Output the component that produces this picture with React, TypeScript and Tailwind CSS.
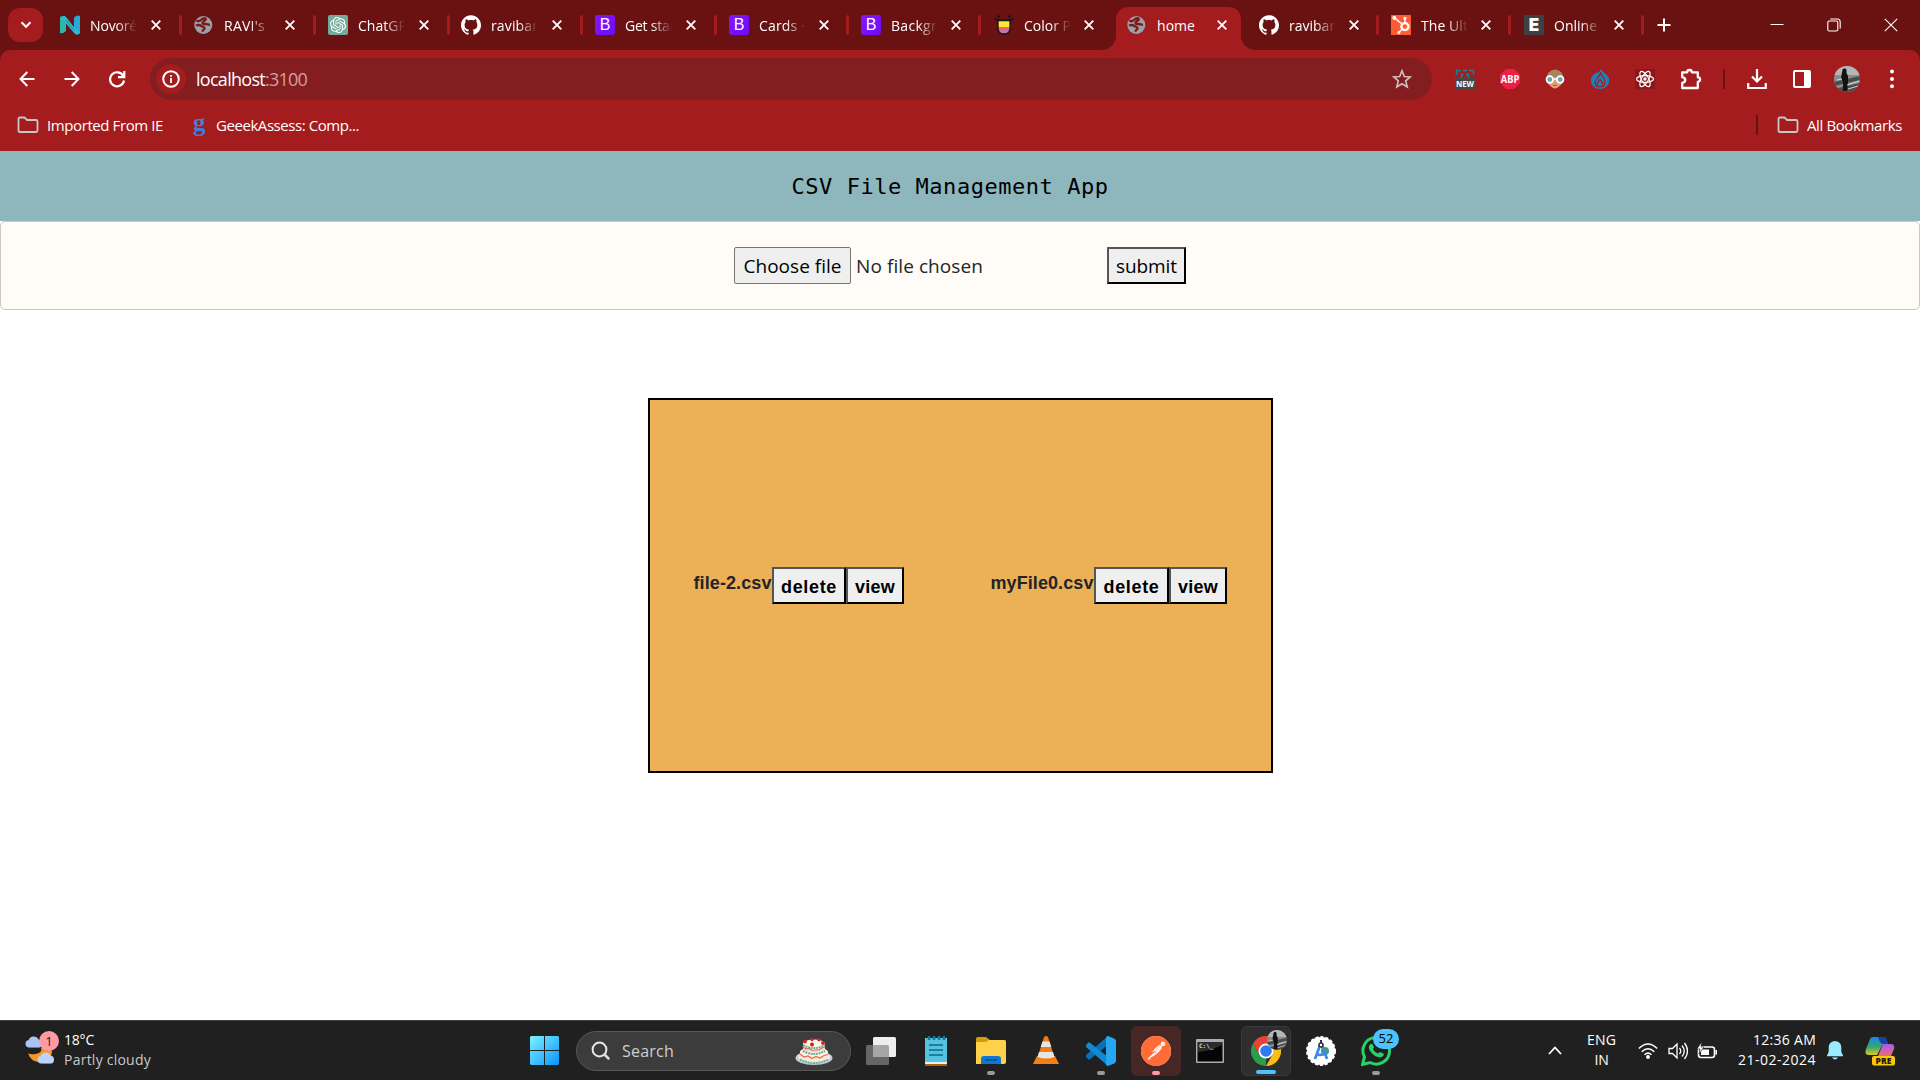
import React, { useLayoutEffect, useRef, useState } from "react";
import { SiGithub, SiOpenai, SiHubspot, SiPostman } from "react-icons/si";

const ui = "font-['Open_Sans','Noto_Sans',sans-serif]";

/* Single line of text whose tracking is adjusted so that it spans `w` pixels. */
function Fit({ w, children, className = "" }: { w: number; children: string; className?: string }) {
  const ref = useRef<HTMLSpanElement>(null);
  const [spacing, setSpacing] = useState(0);
  useLayoutEffect(() => {
    if (ref.current) {
      const natural = ref.current.getBoundingClientRect().width;
      setSpacing((w - natural) / children.length);
    }
  }, []);
  return (
    <span ref={ref} className={`inline-block whitespace-pre ${className}`} style={{ letterSpacing: spacing }}>
      {children}
    </span>
  );
}

const Globe = () => (
  <svg viewBox="0 0 20 20" className="size-5">
    <circle cx="9.3" cy="10" r="9" fill="#9aa0a6" />
    <path d="M2.500 5.500C4 6.500 6 6 7.500 4.500 8.500 3.500 10.500 3 12 3.500M12 3.500c.5 2-3 2.500-3.500 4-.3 1.500 1.500 1.500 3 1.500 2 0 3 1 4.500 .8M2 10.500c2-.8 4-.5 5.500.5 1.500 1 3 .8 3 2.200 0 1.500-2 1.500-2 3.500" fill="none" stroke="#7e1719" strokeWidth="2.300" />
  </svg>
);
const BootstrapIcon = () => (
  <div className="flex size-5 items-center justify-center rounded-[3px] bg-gradient-to-br from-[#8a12ff] to-[#6a0cf5] font-['Liberation_Sans',sans-serif] text-[16px] leading-none text-white">B</div>
);
const Novo = () => (
  <svg viewBox="0 0 20 20" className="size-5">
    <path d="M0 3q0-2.500 2-1.500L6 4v12q-3 3-6 2z" fill="#2fb7a6" />
    <path d="M14 2.500q3-3 6-1.500v16q0 3-3 1.500l-3-2z" fill="#26a9d8" />
    <path d="M2 1.500Q4-.5 6.500 2.500L15 13.500q3 3 5 3.500-1 4-5 2L2 4z" fill="#25bfd3" />
    <path d="M6 5l8 10.500" stroke="#1689a5" strokeWidth="1" />
  </svg>
);
const ChatIcon = () => (
  <div className="flex size-5 items-center justify-center rounded-[2px] bg-[#74aa9c] text-white"><SiOpenai size={16} /></div>
);
const ColorHunt = () => (
  <svg viewBox="0 0 20 20" className="size-5">
    <path d="M4 5h12v8c0 3-2 5.500-6 5.500S4 16 4 13z" fill="#ffe92e" />
    <path d="M4 12h12l-.5 3h-11z" fill="#ff5b6d" />
    <path d="M4.500 15h11c-.5 2-2.500 4-5.500 4s-5-2-5.500-4z" fill="#b67bb4" />
    <path d="M.5 4c4 2 15 2 19 0M3.900 5v8c0 3.500 2.500 6 6.100 6s6.100-2.500 6.100-6V5" fill="none" stroke="#161616" strokeWidth="1.500" />
    <circle cx="4.500" cy="1.500" r="1.300" fill="#161616" /><circle cx="15.500" cy="1.500" r="1.300" fill="#161616" />
  </svg>
);
const HubIcon = () => <div className="flex size-5 items-center justify-center bg-[#ff5c35] text-white"><SiHubspot size={18} /></div>;
const EIcon = () => <div className="flex size-5 items-center justify-center bg-[#3b4145] font-['Inter',sans-serif] text-[17px] leading-none font-black text-white">E</div>;
const Git = () => <SiGithub size={20} className="text-white" />;

const tabs = [
  { icon: <Novo />, text: "Novoré", w: 47 },
  { icon: <Globe />, text: "RAVI's I", w: 49 },
  { icon: <ChatIcon />, text: "ChatGP", w: 49 },
  { icon: <Git />, text: "raviban", w: 50 },
  { icon: <BootstrapIcon />, text: "Get star", w: 50 },
  { icon: <BootstrapIcon />, text: "Cards ·", w: 46 },
  { icon: <BootstrapIcon />, text: "Backgr", w: 46 },
  { icon: <ColorHunt />, text: "Color P", w: 47 },
  { icon: <Globe />, text: "home", w: 38, active: true },
  { icon: <Git />, text: "raviban", w: 49 },
  { icon: <HubIcon />, text: "The Ult", w: 47 },
  { icon: <EIcon />, text: "Online", w: 43 },
];

const TabX = () => (
  <svg viewBox="0 0 10 10" className="size-2.5"><path d="M.7.7l8.600 8.600M9.300.7L.7 9.300" stroke="#fff" strokeWidth="1.800" /></svg>
);

function TabStrip() {
  return (
    <div className="flex h-[50px] bg-[#6a1112] pl-2">
      <div className="mt-2 flex h-[34px] w-[35px] items-center justify-center rounded-xl bg-[#a51c1e]">
        <svg viewBox="0 0 12 8" className="h-2 w-3"><path d="M1.500 1.300L6 5.800l4.500-4.500" fill="none" stroke="#fff" strokeWidth="2" /></svg>
      </div>
      <div className="ml-[17px] grid grid-cols-[134px_134px_133px_134px_134px_132px_133px_133px_132px_132px_133px_133px]">
        {tabs.map((t, i) => (
          <div key={i} className="relative flex h-[50px] items-center">
            {t.active && (
              <svg viewBox="0 0 156 43" className="absolute top-[7px] left-[-26px] h-[43px] w-[156px]">
                <path d="M0 43c8 0 15-6 15-14V13C15 5 20 0 28 0h99c8 0 13 5 13 13v16c0 8 7 14 15 14z" fill="#a51c1e" />
              </svg>
            )}
            <div className="relative flex w-5 shrink-0">{t.icon}</div>
            <div className={`relative ml-2.5 h-6 w-[48px] shrink-0 overflow-hidden pt-px text-[14px] leading-6 text-white ${t.active ? "" : "[mask-image:linear-gradient(to_right,#000_55%,transparent_98%)]"}`}>
              <Fit w={t.w}>{t.text}</Fit>
            </div>
            <div className={`relative flex ${i > 4 ? "ml-3" : "ml-[13px]"}`}><TabX /></div>
            {i !== 7 && i !== 8 && <div className={`h-5 w-[3px] rounded-full bg-[#a51c1e] ${i > 4 ? "ml-[17px]" : "ml-[18px]"}`} />}
          </div>
        ))}
      </div>
      <svg viewBox="0 0 14 14" className="mt-[18px] size-3.5"><path d="M7 .5v13M.5 7h13" stroke="#fff" strokeWidth="2" /></svg>
      <div className="ml-auto flex items-center gap-[43px] pr-[22px]">
        <svg viewBox="0 0 14 14" className="size-3.5"><path d="M.5 6.500h13" stroke="#fff" strokeWidth="1" /></svg>
        <svg viewBox="0 0 14 14" className="size-3.5" fill="none" stroke="#fff" strokeWidth="1.100"><rect x=".8" y="3" width="10" height="10" rx="1.500" /><path d="M3.300 1h6.900q3 0 3 3v6.500" /></svg>
        <svg viewBox="0 0 14 14" className="size-3.5"><path d="M.8.8l12.400 12.400M13.200.8L.8 13.200" stroke="#fff" strokeWidth="1.100" /></svg>
      </div>
    </div>
  );
}

const Portrait = ({ className }: { className: string }) => (
  <svg viewBox="0 0 26 26" className={className}>
    <defs><clipPath id="portrait"><circle cx="13" cy="13" r="13" /></clipPath></defs>
    <g clipPath="url(#portrait)">
      <rect width="26" height="26" fill="#8b8d8c" /><rect width="26" height="9" fill="#b5b7b6" />
      <path d="M0 16l26-6v4L0 20zM0 23l26-6v9H0z" fill="#4a4c4b" />
      <path d="M8.500 4c0-2 4-2 4 0v3l1.500 3v8l-1 7H9V16L7 12z" fill="#121212" />
      <path d="M13 19l12-4M3 14l5-1M14 23l10-3" stroke="#d4d4d4" />
    </g>
  </svg>
);

const Folder = () => (
  <svg viewBox="0 0 22 18" className="h-[18px] w-[22px]"><path d="M1.500 3Q1.500 1.500 3 1.500h4.500l2.500 2.500h9q1.500 0 1.500 1.500v9q0 1.500-1.500 1.500H3q-1.500 0-1.500-1.500z" fill="none" stroke="#c7c7c7" strokeWidth="1.800" /></svg>
);

function Toolbar() {
  return (
    <div className="bg-[#6a1112]">
      <div className="h-[101px] rounded-t-[10px] bg-[#a51c1e]">
        <div className="flex h-[58px] items-center pl-[19px]">
          <svg viewBox="0 0 16 16" className="size-4" fill="none" stroke="#fff" strokeWidth="2"><path d="M15.500 8H2M8.300 1L1.500 8l6.800 7" /></svg>
          <svg viewBox="0 0 16 16" className="ml-[29px] size-4" fill="none" stroke="#fff" strokeWidth="2"><path d="M.5 8H14M7.700 1l6.800 7-6.800 7" /></svg>
          <svg viewBox="0 0 18 18" className="ml-7 size-[18px]" fill="none" stroke="#fff" strokeWidth="2.200"><path d="M15.300 6A7 7 0 1 0 16 10.500M16.300 1v6.200H10" /></svg>
          <div className="ml-6 flex h-[42px] w-[1282px] items-center rounded-full bg-[#841d1f] pl-[6px]">
            <div className="flex size-[30px] items-center justify-center rounded-full bg-[#a51c1e]">
              <svg viewBox="0 0 18 18" className="size-[18px]"><circle cx="9" cy="9" r="7.800" fill="none" stroke="#fff" strokeWidth="2" /><path d="M9 8v5M9 5v1.800" stroke="#fff" strokeWidth="1.800" /></svg>
            </div>
            <div className="ml-[10px] flex text-[18px] leading-6"><Fit w={69} className="text-white">localhost</Fit><Fit w={42} className="text-[#d5a0a1]">:3100</Fit></div>
            <svg viewBox="0 0 20 20" className="mr-5 ml-auto size-5"><path d="M10 1.800l2.300 5.700 6 .4-4.600 4 1.500 6L10 14.700l-5.200 3.200 1.500-6-4.600-4 6-.4z" fill="none" stroke="#d0bcbc" strokeWidth="1.700" /></svg>
          </div>
          <div className="ml-[23px] flex items-center gap-[25px]">
            <svg viewBox="0 0 20 20" className="size-5"><path d="M1.500 6V1.500H6M8 1.500h4M14 1.500h4.500V6M6.500 9V5.500h2M11 5.500h2.500V9" fill="none" stroke="#1b8291" strokeWidth="1.500" /><rect y="9" width="20" height="11" fill="#474747" /><text x="10" y="18" textAnchor="middle" textLength="18" lengthAdjust="spacingAndGlyphs" fontSize="9" fontWeight="700" fontFamily="Open Sans, sans-serif" fill="#fff">NEW</text></svg>
            <svg viewBox="0 0 20 20" className="size-5"><path d="M6 0h8l6 6v8l-6 6H6l-6-6V6z" fill="#f01d45" /><text x="10" y="14" textAnchor="middle" textLength="18.500" lengthAdjust="spacingAndGlyphs" fontSize="11" fontWeight="700" fontFamily="Open Sans, sans-serif" fill="#fff">ABP</text></svg>
            <svg viewBox="0 0 20 20" className="size-5"><ellipse cx="10" cy="9.500" rx="8.700" ry="9" fill="#a88558" /><path d="M3 8h14v5q-3 6.500-7 6.500T3 13z" fill="#e3a173" /><path d="M3 8q8 0 12-5l3 6" fill="#a88558" /><circle cx="4.800" cy="10.500" r="3.300" fill="#64a6ba" stroke="#fff" strokeWidth="1.700" /><circle cx="15.200" cy="10.500" r="3.300" fill="#64a6ba" stroke="#fff" strokeWidth="1.700" /><path d="M8.300 10h3.400" stroke="#fff" strokeWidth="1.500" /><path d="M8 16.300h4" stroke="#9b5741" /></svg>
            <svg viewBox="0 0 20 20" className="size-5"><path d="M11 0c1 3 6 4.500 7.500 8.500C20.500 14 17 20 10 20S-.5 14 1.500 8.500C2.500 6 4 5.500 5 4c2 .5 5-1 6-4z" fill="#207fb5" /><path d="M10.500 3C11 7 7 8 5.500 12c-.8 2.500 0 4.500 1.500 6M10.500 3c0 4 4.500 5.500 4.500 10 0 2-.8 4-2 5" fill="none" stroke="#a51c1e" strokeWidth="1.200" /><path d="M10 10.500c2 2 2.700 3.300 2.700 4.800a2.700 2.700 0 0 1-5.400 0c0-1.500.7-2.800 2.700-4.800z" fill="none" stroke="#a51c1e" strokeWidth="1.200" /></svg>
            <svg viewBox="0 0 20 20" className="size-5"><rect width="20" height="20" rx="1" fill="#8c171a" /><g fill="none" stroke="#fff" strokeWidth="1.200"><ellipse cx="10" cy="10" rx="8.500" ry="3.400" /><ellipse cx="10" cy="10" rx="8.500" ry="3.400" transform="rotate(60 10 10)" /><ellipse cx="10" cy="10" rx="8.500" ry="3.400" transform="rotate(120 10 10)" /></g><circle cx="10" cy="10" r="1.700" fill="#fff" /></svg>
            <svg viewBox="0 0 22 22" className="size-[22px]"><path d="M2.200 4.300h5a2.300 2.300 0 0 1 4.600 0h6v5a2.300 2.300 0 0 1 0 4.600V20H2.200v-5q3-.5 3-2.900t-3-2.900z" fill="none" stroke="#fff" strokeWidth="2.300" strokeLinejoin="round" /></svg>
          </div>
          <div className="ml-[21px] h-5 w-[2px] bg-[#6a1112]" />
          <svg viewBox="0 0 20 20" className="ml-[22px] size-5" fill="none" stroke="#fff" strokeWidth="2.200"><path d="M10 0v12M5 7.500l5 5 5-5M1.200 14v5h17.600v-5" /></svg>
          <svg viewBox="0 0 20 20" className="ml-[25px] size-5"><rect x="2" y="2" width="16" height="16" rx="1" fill="none" stroke="#fff" strokeWidth="2" /><path d="M12 2h6v16h-6z" fill="#fff" /></svg>
          <Portrait className="ml-[22px] size-[26px]" />
          <svg viewBox="0 0 4 20" className="ml-[30px] h-5 w-1" fill="#fff"><circle cx="2" cy="2.500" r="2" /><circle cx="2" cy="10" r="2" /><circle cx="2" cy="17.300" r="2" /></svg>
        </div>
        <div className="flex h-[34px] items-center pr-[18px] pl-[17px] text-[15px] leading-6 text-white">
          <Folder />
          <Fit w={116} className="ml-2">Imported From IE</Fit>
          <span className="ml-[30px] w-[14px] font-['Liberation_Serif',serif] text-[25px] leading-5 font-bold text-[#3f7fd6] -mt-1">g</span>
          <Fit w={143} className="ml-[9px]">GeeekAssess: Comp...</Fit>
          <div className="mr-[19px] ml-auto h-5 w-[2px] bg-[#6a1112]" />
          <Folder />
          <Fit w={95} className="ml-[8px]">All Bookmarks</Fit>
        </div>
      </div>
    </div>
  );
}

const FileButton = ({ children, w, box }: { children: string; w: number; box: string }) => (
  <button className={`flex h-[37px] items-center justify-center border-2 border-t-[#555] border-r-black border-b-black border-l-[#555] bg-[#efefef] pt-0.5 pl-px text-black ${box}`}>
    <Fit w={w}>{children}</Fit>
  </button>
);

function Page() {
  return (
    <main className="h-[869px] bg-white">
      <header className="flex h-[70px] items-center justify-center bg-[#8db7bc] pt-0.5 pr-5">
        <h1 className="font-['DejaVu_Sans_Mono',monospace] text-[22px] leading-none text-black"><Fit w={317}>CSV File Management App</Fit></h1>
      </header>
      <section className="flex h-[89px] items-center rounded-[5px] border border-[#cacaca] bg-[#fffbf6] pl-[733px] text-[19px] leading-7">
        <button className="flex h-[37px] w-[117px] items-center justify-center rounded-[2px] border border-[#767676] bg-[#efefef] text-black"><Fit w={98}>Choose file</Fit></button>
        <Fit w={127} className="ml-[5px] text-[#212529]">No file chosen</Fit>
        <button className="ml-[124px] flex h-[37px] w-[79px] items-center justify-center border-2 border-t-[#555] border-r-black border-b-black border-l-[#555] bg-[#efefef] text-black"><Fit w={61}>submit</Fit></button>
      </section>
      <section className="mx-auto mt-[88px] flex h-[375px] w-[625px] items-center border-2 border-black bg-[#ecb057] pl-[44px] font-['Liberation_Sans',sans-serif] text-[18px] leading-6 font-bold">
        <Fit w={78} className="-mt-1.5 text-[#212529]">file-2.csv</Fit>
        <FileButton w={56} box="w-[74px]">delete</FileButton>
        <FileButton w={40} box="w-[58px]">view</FileButton>
        <Fit w={103} className="-mt-1.5 ml-[87px] text-[#212529]">myFile0.csv</Fit>
        <FileButton w={56} box="w-[75px]">delete</FileButton>
        <FileButton w={40} box="w-[58px]">view</FileButton>
      </section>
    </main>
  );
}

const Cloud = ({ x, y, w, o }: { x: number; y: number; w: number; o: string }) => (
  <svg x={x} y={y} width={w} height={w * 0.65} viewBox="0 0 20 13"><path d="M4.500 13a4.300 4.300 0 0 1-.5-8.500 6 6 0 0 1 11-.5 4.600 4.600 0 0 1 .5 9z" fill={o} /></svg>
);

const Cake = () => (
  <svg viewBox="0 0 38 28" className="h-7 w-[38px]">
    <ellipse cx="19" cy="21" rx="18.500" ry="7" fill="#c9c9d6" />
    <ellipse cx="19" cy="20" rx="16" ry="6" fill="#e9e9f0" />
    <path d="M5 15v7q14 7 28 0v-7z" fill="#fbead0" /><ellipse cx="19" cy="15" rx="14" ry="4.500" fill="#fff6e4" />
    <path d="M8 6v8q11 5 22 0V6z" fill="#fbe5c8" /><ellipse cx="19" cy="6.500" rx="11" ry="4" fill="#fff8e8" />
    <path d="M8 8q11 6 22 0M8 14q11 6 22 0M5 22.500q14 7 28 0" fill="none" stroke="#5db5ac" strokeWidth="2" strokeDasharray="2 .7" />
    <path d="M8 10l3 2 3-.5 3 2 4-.5 3 0 3-2 3-1M5 17l4 3 4-1 4 2.500 4-2 4 1.500 4-2.500 4-1" fill="none" stroke="#e2675e" strokeWidth="1.200" />
    <g fill="#c8251f"><circle cx="10" cy="4.500" r="1.900" /><circle cx="17" cy="7.500" r="2" /><circle cx="28" cy="6" r="1.900" /><circle cx="24" cy="2.800" r="1.700" /><circle cx="17" cy="2.500" r="1.700" /></g>
  </svg>
);

const Dot = ({ c = "w-2 bg-[#999]" }: { c?: string }) => <div className={`absolute bottom-[1px] left-1/2 h-1 -translate-x-1/2 rounded-full ${c}`} />;

function Task({ children, box, dot }: { children: React.ReactNode; box: string; dot?: React.ReactNode }) {
  return <div className={`relative flex h-[50px] items-center justify-center rounded-md ${box}`}>{children}{dot}</div>;
}

function Taskbar() {
  return (
    <footer className="flex h-[60px] items-center border-t border-[#3b403f] bg-[#202020] text-white">
      <div className="flex w-[530px] shrink-0 items-center self-start pt-[7px] pl-6">
        <svg viewBox="0 0 36 36" className="size-9">
          <path d="M17 17q2 4-5 6-6 1-8-1 3 10 14 9 9-1 10-10-1-5-5-6z" fill="#f39a26" />
          <Cloud x={1} y={5} w={18} o="#a9c5f4" /><Cloud x={13} y={21} w={18} o="#bcd3fa" />
          <circle cx="25" cy="10" r="10" fill="#ff99a4" />
          <text x="25" y="14.500" fontSize="13" textAnchor="middle" fontFamily="Open Sans, sans-serif" fill="#25191b">1</text>
        </svg>
        <div className="ml-1 flex flex-col items-start pt-0.5 text-[14px] leading-5"><Fit w={30}>18°C</Fit><Fit w={87} className="text-[#c9c9c9]">Partly cloudy</Fit></div>
      </div>
      <svg viewBox="0 0 29 29" className="size-[29px]">
        <defs><linearGradient id="win" x1="0" y1="0" x2="1" y2="1"><stop stopColor="#7df3ff" /><stop offset="1" stopColor="#0a93ff" /></linearGradient></defs>
        <path d="M1 0h13v14H0V1zM15 0h13l1 1v13H15zM0 15h14v14H1l-1-1zM15 15h14v13l-1 1H15z" fill="url(#win)" />
      </svg>
      <div className="ml-[17px] flex h-10 w-[275px] items-center rounded-full border border-[#575757] bg-[#3c3c3c] pr-[17px] pl-[14px]">
        <svg viewBox="0 0 19 19" className="size-[19px]" fill="none"><circle cx="8.500" cy="8.500" r="6.900" stroke="#e8e8e8" strokeWidth="2" /><path d="M13.500 13.500l4 4" stroke="#ddd" strokeWidth="2.500" strokeLinecap="round" /></svg>
        <Fit w={52} className="ml-3 text-[16px] leading-6 text-[#cfcfcf]">Search</Fit>
        <div className="ml-auto"><Cake /></div>
      </div>
      <Task box="w-[60px]">
        <svg viewBox="0 0 30 28" className="h-7 w-[30px]"><rect y="8" width="23" height="20" rx="1.500" fill="#666" /><rect x="7" width="23" height="20" rx="1.500" fill="#eee" /><path d="M7 8h14.500q1.500 0 1.500 1.500V20H7z" fill="#a6a6a6" /></svg>
      </Task>
      <Task box="w-[50px]">
        <svg viewBox="0 0 22 30" className="h-[30px] w-[22px]"><rect y="25" width="22" height="5" rx="1" fill="#b35a14" /><rect y="2" width="22" height="26" fill="#e9eef0" /><rect y="2" width="22" height="24" rx="1" fill="#55c3df" /><path d="M4 9h14M4 14h14M4 19h14" stroke="#0b6a8a" strokeWidth="1.700" /><path d="M4 0v4M9 0v4M14 0v4M19 0v4" stroke="#14799c" strokeWidth="2.500" /></svg>
      </Task>
      <Task box="ml-[5px] w-[50px]" dot={<Dot />}>
        <svg viewBox="0 0 30 27" className="h-[27px] w-[30px]"><path d="M0 2q0-2 2-2h8l4 3h14q2 0 2 2v5H0z" fill="#d89b08" /><path d="M0 5h10l3-2h15q2 0 2 2v20q0 2-2 2H0z" fill="#ffd04a" /><path d="M5 27v-5q0-3 3-3h14q3 0 3 3v5z" fill="#0c78d4" /><path d="M9 23h12" stroke="#054a8e" strokeWidth="1.500" /></svg>
      </Task>
      <Task box="ml-[5px] w-[50px]">
        <svg viewBox="0 0 26 29" className="h-[29px] w-[26px]"><path d="M4 20h18l4 8H0z" fill="#f58213" /><path d="M11 1q2-2 4 0l7 22q-9 5-18 0z" fill="#f47a12" /><path d="M9.500 5.500h7l1.800 5.500H7.700zM6 16h14l1.500 5q-8 3-17 0z" fill="#e5e5e5" /></svg>
      </Task>
      <Task box="ml-[5px] w-[50px]" dot={<Dot />}>
        <svg viewBox="0 0 30 30" className="size-[30px]"><path d="M22 0v9L3 24l-3-3v-2z" fill="#0a70b8" /><path d="M22 30v-9L3 6 0 9v2z" fill="#1389d0" /><path d="M22 0l6 2.500q2 1 2 2.500v20q0 1.500-2 2.500L22 30l-2-1V1z" fill="#25a7f2" /></svg>
      </Task>
      <Task box="ml-[5px] w-[50px] bg-[#472626]" dot={<Dot c="w-2 bg-[#ff99a4]" />}><div className="flex size-[30px] items-center justify-center rounded-full bg-white"><SiPostman size={30} className="text-[#ff6c37]" /></div></Task>
      <Task box="ml-[4px] mr-px w-[50px]">
        <svg viewBox="0 0 28 24" className="h-6 w-7"><rect width="28" height="24" rx="1" fill="#a9adb1" /><rect x="1.500" y="3" width="25" height="19.500" fill="#050505" /><path d="M2 13Q14 12 26 6V3H2z" fill="#2b2b2b" /><text x="3" y="9" fontSize="6" fontWeight="700" fontFamily="DejaVu Sans Mono, monospace" fill="#ddd">C:\_</text></svg>
      </Task>
      <Task box="ml-[5px] w-[50px] border border-[#3a3a3a] bg-[#2e2e2e]" dot={<Dot c="w-5 bg-[#4cc2ff]" />}>
        <svg viewBox="0 0 30 30" className="size-[30px]"><path d="M15 15v15A15 15 0 0 1 2 7.500L8.500 18.700z" fill="#2c9e4b" /><path d="M28 7.500A15 15 0 0 1 15 30l6.500-11.300L15 7.500z" fill="#fbbc14" /><path d="M15 7.500h13A15 15 0 0 0 2 7.500l6.500 11.200z" fill="#ea4335" /><circle cx="15" cy="15" r="7.500" fill="#fff" /><circle cx="15" cy="15" r="5.800" fill="#3079ee" /></svg>
        <Portrait className="absolute top-[3px] right-[3px] size-5" />
      </Task>
      <Task box="ml-[5px] w-[50px]">
        <svg viewBox="0 0 30 30" className="size-[30px]"><circle cx="15" cy="15" r="14" fill="#fff" stroke="#fff" strokeWidth="2" strokeDasharray="3 2" /><circle cx="19" cy="15" r="4" fill="#3ba55b" /><path d="M14.500 8L9 23M15.500 8L21 23M9.500 18q6 2 11-1" stroke="#4285f4" strokeWidth="2.800" fill="none" /><circle cx="15" cy="9" r="2" fill="#fff" stroke="#333" strokeWidth="1.500" /><path d="M15 4v3" stroke="#333" strokeWidth="2" /></svg>
      </Task>
      <Task box="ml-[5px] w-[50px]" dot={<Dot />}>
        <svg viewBox="0 0 30 30" className="size-[30px]"><path d="M1.500 28.500l2-7.500A13.300 13.300 0 1 1 9 26.500z" fill="none" stroke="#25d366" strokeWidth="3" /><path d="M8 10q2-4 4-1l1 2.500-1 2q2 3 5 4l2-1.500 3.500 1.500q1 2-2 3.500c-5 2-14-6-12.500-11z" fill="#25d366" /></svg>
        <div className="absolute top-[3px] left-[22px] flex h-5 w-[26px] items-center justify-center rounded-full bg-[#4cc2ff] text-[13px] leading-none text-black">52</div>
      </Task>
      <div className="mr-[25px] ml-auto flex items-center">
        <svg viewBox="0 0 14 9" className="h-[9px] w-3.5"><path d="M1 8l6-6.500L13 8" fill="none" stroke="#fff" strokeWidth="1.800" /></svg>
        <div className="-mt-0.5 ml-6 flex w-[31px] flex-col items-center text-[14px] leading-5"><Fit w={29}>ENG</Fit><Fit w={14}>IN</Fit></div>
        <svg viewBox="0 0 20 16" className="ml-[21px] h-4 w-5" fill="none" stroke="#fff" strokeWidth="1.500"><path d="M.8 5.500q9.200-9 18.400 0M3.700 8.800q6.300-6 12.600 0M6.500 11.800q3.500-3.300 7 0" /><circle cx="10" cy="14" r="1.200" fill="#fff" /></svg>
        <svg viewBox="0 0 20 18" className="ml-2.5 h-[18px] w-5" fill="none" stroke="#fff" strokeWidth="1.300"><path d="M1 6.500h3.500L9 2v14l-4.500-4.500H1zM11.500 6q2.500 3 0 6M14 3.500q4.500 5.500 0 11M16.500 1q6 8 0 16" /></svg>
        <svg viewBox="0 0 21 18" className="ml-[9px] h-[18px] w-[21px]"><rect x="1.500" y="5" width="16" height="10.500" rx="2.500" fill="none" stroke="#fff" strokeWidth="1.600" /><path d="M4 7.500h8v5.500H4zM18.500 8h1.500v4.500h-1.500z" fill="#fff" /><path d="M4.500 0L0 7h3l-1 5 5-7H4z" fill="#fff" stroke="#202020" strokeWidth=".6" /></svg>
        <div className="-mt-0.5 ml-5 flex w-[78px] flex-col items-end text-[14px] leading-5"><Fit w={63}>12:36 AM</Fit><Fit w={78}>21-02-2024</Fit></div>
        <svg viewBox="0 0 16 19" className="ml-[11px] h-[19px] w-4" fill="#99ebff"><path d="M8 0a6.300 6.300 0 0 1 6.300 6.300V11L16 14.500v.8H0v-.8L1.700 11V6.300A6.300 6.300 0 0 1 8 0zM5 16.500h6q-3 4-6 0z" /></svg>
        <svg viewBox="0 0 30 30" className="ml-[22px] size-[30px]">
          <defs><linearGradient id="cpa" x1="0" y1="0" x2="0" y2="1"><stop stopColor="#138bea" /><stop offset=".55" stopColor="#36a56e" /><stop offset="1" stopColor="#dccb28" /></linearGradient><linearGradient id="cpb" x1="0" y1="0" x2="0" y2="1"><stop stopColor="#a55cf0" /><stop offset="1" stopColor="#f06a70" /></linearGradient></defs>
          <path d="M8 1h11q2 0 3 4l1 3h-5L12 19H4q-5 0-3-6L5 3q1-2 3-2z" fill="url(#cpa)" /><path d="M13 1h6q2 0 3 4l1 3h-5q-3 0-5-7z" fill="#1741a6" /><path d="M18 8h8q4 0 3 5l-3 7H13z" fill="url(#cpb)" />
          <rect x="7" y="20" width="23" height="9.500" rx="2" fill="#fdc70a" /><text x="18.500" y="27.700" textAnchor="middle" fontSize="8.500" fontWeight="800" fontFamily="Open Sans, sans-serif" textLength="16" fill="#1a1a1a">PRE</text>
        </svg>
      </div>
    </footer>
  );
}

export default function App() {
  return (
    <div className={`h-[1080px] w-[1920px] overflow-hidden ${ui}`}>
      <TabStrip />
      <Toolbar />
      <Page />
      <Taskbar />
    </div>
  );
}
